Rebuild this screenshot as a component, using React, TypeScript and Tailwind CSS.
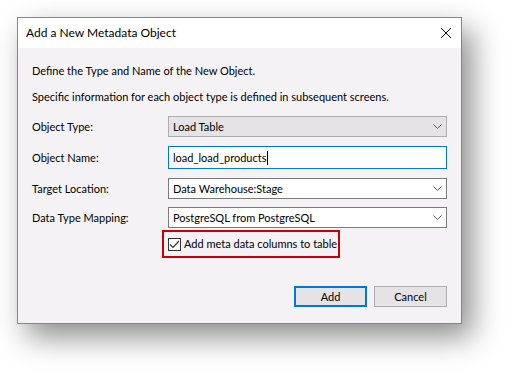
import React from 'react'

const font = { fontFamily: 'Lato, "Noto Sans", sans-serif' }

const Chevron = () => (
    <svg width="9" height="5" viewBox="0 0 9 5" className="shrink-0">
        <path d="M0.5 0.5 L4.5 4.5 L8.5 0.5" fill="none" stroke="#5a5a5a" strokeWidth="1" />
    </svg>
)

const Combo = ({ value, disabled }: { value: string; disabled?: boolean }) => (
    <div
        className={
            disabled
                ? 'flex h-[21px] flex-1 items-center justify-between border border-[#adadad] bg-[#e6e3e6] pl-[4px] pr-[4px]'
                : 'flex h-[21px] flex-1 items-center justify-between border border-[#7a7a7a] bg-white pl-[4px] pr-[4px]'
        }
    >
        <span className="leading-[16px]">{value}</span>
        <Chevron />
    </div>
)

const Row = ({ label, children }: { label: string; children: React.ReactNode }) => (
    <div className="flex items-center">
        <div className="w-[136px] leading-[16px]">{label}</div>
        {children}
    </div>
)

const App = () => {
    return (
        <div className="min-h-[373px] w-[510px] bg-white pl-[17px] pt-[17px]" style={font}>
            <div className="w-[445px] border border-[#2ba3dc] bg-[#f5f2f5] text-[11px] text-black shadow-[10px_13px_28px_rgba(0,0,0,0.45)]">
                {/* title bar */}
                <div className="flex h-[30px] items-center justify-between bg-white pl-[8px] pr-[10px]">
                    <span className="text-[12px] leading-[16px]">Add a New Metadata Object</span>
                    <svg width="10" height="10" viewBox="0 0 10 10">
                        <path d="M0 0 L10 10 M10 0 L0 10" stroke="#000" strokeWidth="1" />
                    </svg>
                </div>

                <div className="px-[14px] pb-[16px] pt-[15px]">
                    <p className="whitespace-nowrap leading-[16px]">Define the Type and Name of the New Object.</p>
                    <p className="mt-[10px] whitespace-nowrap leading-[16px]">
                        Specific information for each object type is defined in subsequent screens.
                    </p>

                    <div className="mt-[11px] flex flex-col">
                        <Row label="Object Type:">
                            <Combo value="Load Table" disabled />
                        </Row>
                        <div className="mt-[9px]">
                            <Row label="Object Name:">
                                <div className="flex h-[23px] flex-1 items-center border border-[#0078d7] bg-white pl-[4px]">
                                    <span className="leading-[16px]">load_load_products</span>
                                    <span className="ml-[1px] h-[14px] w-px bg-black" />
                                </div>
                            </Row>
                        </div>
                        <div className="mt-[9px]">
                            <Row label="Target Location:">
                                <Combo value="Data Warehouse:Stage" />
                            </Row>
                        </div>
                        <div className="mt-[8px]">
                            <Row label="Data Type Mapping:">
                                <Combo value="PostgreSQL from PostgreSQL" />
                            </Row>
                        </div>
                        <div className="mt-[2px] flex">
                            <div className="w-[130px]" />
                            <div className="flex h-[28px] items-center border-2 border-[#c8000a] pl-[4px] pr-[1px]">
                                <span className="flex h-[13px] w-[13px] items-center justify-center border border-[#333] bg-white">
                                    <svg width="11" height="9" viewBox="0 0 11 9">
                                        <path d="M1 4.5 L4 7.5 L10 1" fill="none" stroke="#333" strokeWidth="1.2" />
                                    </svg>
                                </span>
                                <span className="ml-[3px] leading-[16px]">Add meta data columns to table</span>
                            </div>
                        </div>
                    </div>

                    <div className="mt-[28px] flex justify-end gap-[7px]">
                        <button className="h-[21px] w-[73px] border-2 border-[#0078d7] bg-[#e6e3e6] leading-[16px]">
                            Add
                        </button>
                        <button className="h-[21px] w-[73px] border border-[#adadad] bg-[#e6e3e6] leading-[16px]">
                            Cancel
                        </button>
                    </div>
                </div>
            </div>
        </div>
    )
}

export default App
